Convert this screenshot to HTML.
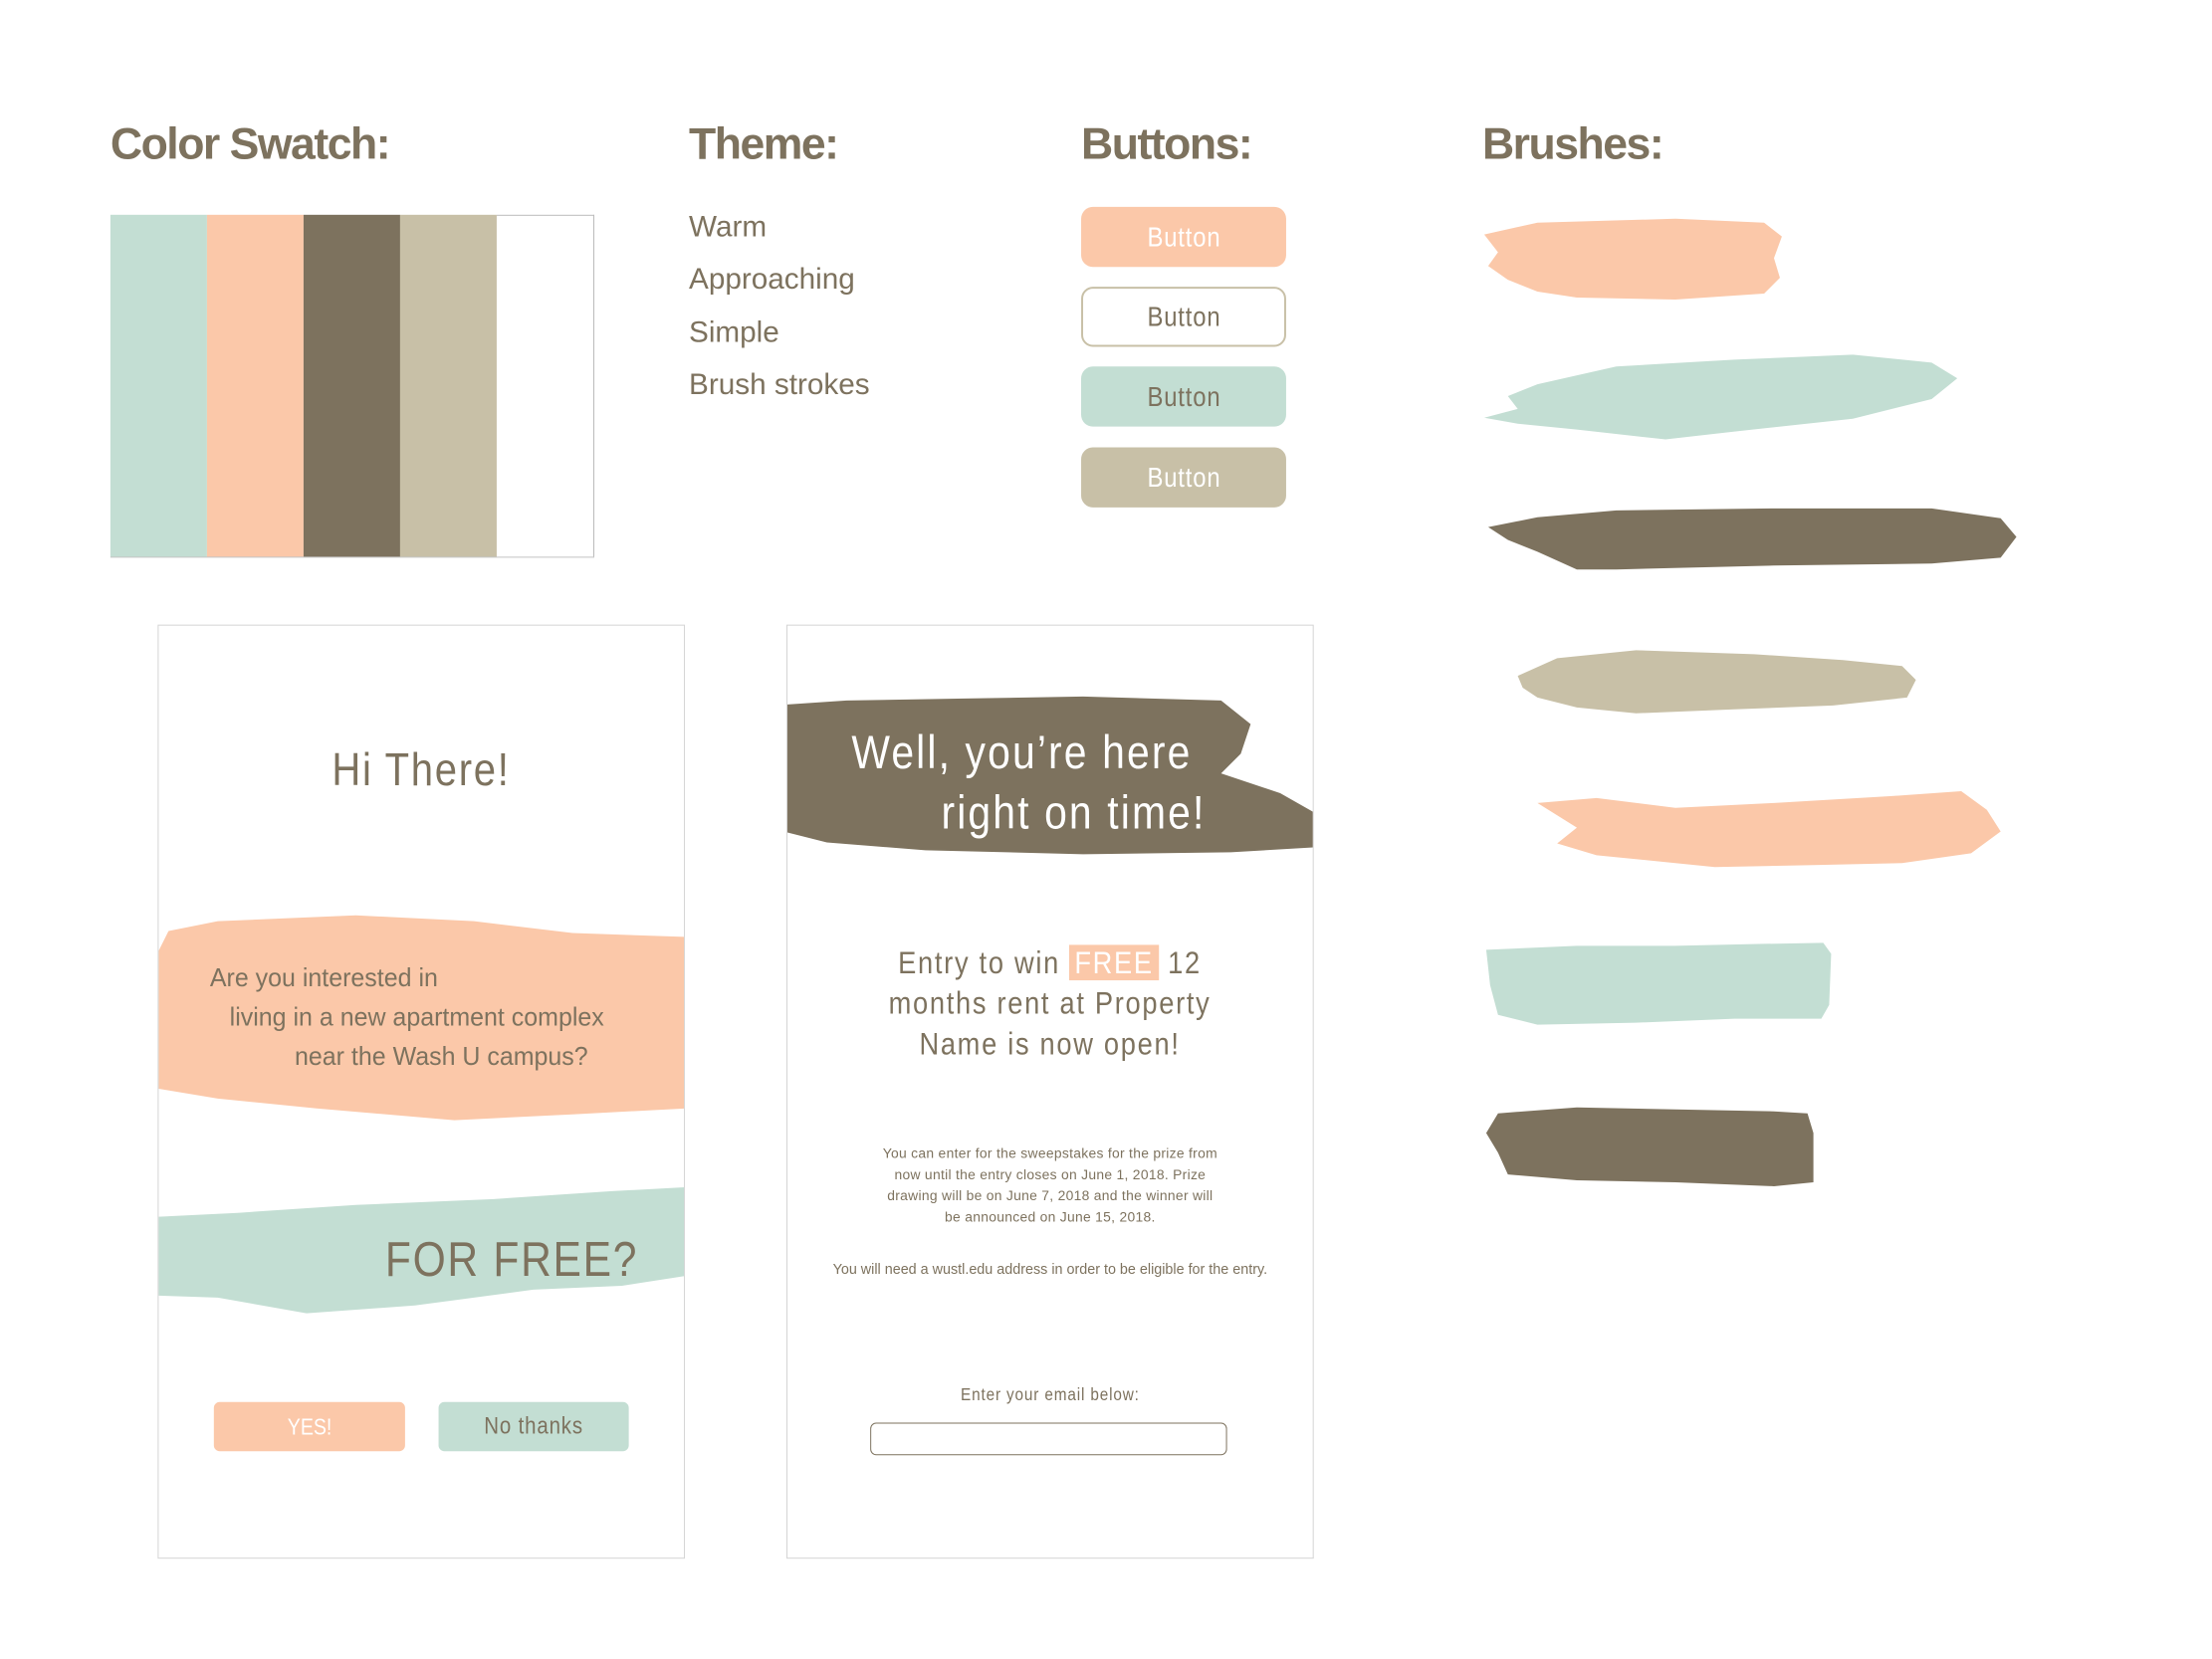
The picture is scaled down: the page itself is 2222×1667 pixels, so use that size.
<!DOCTYPE html>
<html><head><meta charset="utf-8"><style>
*{margin:0;padding:0;box-sizing:border-box}
body{width:2222px;height:1667px;background:#fff;position:relative;overflow:hidden;font-family:"Liberation Sans",sans-serif;color:#7d725e}
#w{position:absolute;left:0;top:0;width:2222px;height:1667px;transform:scale(0.99);transform-origin:0 0}
.a{position:absolute}
h2{position:absolute;font-size:45px;font-weight:bold;letter-spacing:-1.5px;color:#7d725e;top:120px}
.t{position:absolute;left:699px;font-size:30px;line-height:30px}
.btn{position:absolute;left:1097px;width:208px;height:61px;border-radius:12px;font-size:28px;text-align:center;line-height:61px;letter-spacing:1px}
.phone{position:absolute;top:634px;width:535px;height:948px;border:1.5px solid #d4d4d4;background:#fff;overflow:hidden}
.c{position:absolute;width:100%;text-align:center}
.n{display:inline-block;transform:scaleX(.86)}
.nl{display:inline-block;transform:scaleX(.86);transform-origin:0 0}
.nr{display:inline-block;transform:scaleX(.86);transform-origin:100% 0}
</style></head><body><div id="w">
<h2 style="left:112px">Color Swatch:</h2>
<h2 style="left:699px">Theme:</h2>
<h2 style="left:1097px">Buttons:</h2>
<h2 style="left:1504px">Brushes:</h2>

<div class="a" style="left:112px;top:218px;width:491px;height:348px;display:flex;border-bottom:1.5px solid #bbb">
<div style="flex:1;background:#c3ded3"></div><div style="flex:1;background:#fbc8a9"></div><div style="flex:1;background:#7d725e"></div><div style="flex:1;background:#c8c0a7"></div><div style="flex:1;background:#fff;border:1.5px solid #bbb;border-left:none;border-bottom:none"></div></div>

<div class="t" style="top:216px">Warm</div>
<div class="t" style="top:269px">Approaching</div>
<div class="t" style="top:323px">Simple</div>
<div class="t" style="top:376px">Brush strokes</div>

<div class="btn" style="top:210px;background:#fbc8a9;color:#fff"><span class="n">Button</span></div>
<div class="btn" style="top:291px;background:#fff;border:2px solid #c8c0a7;line-height:57px"><span class="n">Button</span></div>
<div class="btn" style="top:372px;background:#c3ded3"><span class="n">Button</span></div>
<div class="btn" style="top:454px;background:#c8c0a7;color:#fff"><span class="n">Button</span></div>

<svg class="a" style="left:0;top:0" width="2222" height="1667">
<path fill="#fbc8a9" d="M1506 238 L1560 226 L1700 222 L1790 226 L1808 240 L1800 262 L1806 282 L1790 298 L1700 304 L1600 302 L1560 296 L1530 284 L1510 270 L1520 256 Z"/>
<path fill="#c3ded3" d="M1530 402 L1560 390 L1640 372 L1760 365 L1880 360 L1960 368 L1986 384 L1960 405 L1880 425 L1760 438 L1690 446 L1600 436 L1540 430 L1506 424 L1540 415 Z"/>
<path fill="#7d725e" d="M1510 535 L1560 525 L1640 518 L1800 516 L1960 516 L2030 526 L2046 545 L2030 566 L1960 572 L1800 574 L1640 578 L1600 578 L1560 560 L1530 548 Z"/>
<path fill="#c8c0a7" d="M1540 686 L1580 668 L1660 660 L1780 664 L1870 670 L1930 676 L1944 690 L1935 708 L1860 716 L1760 720 L1660 724 L1600 718 L1560 708 L1545 698 Z"/>
<path fill="#fbc8a9" d="M1560 815 L1620 810 L1700 820 L1800 815 L1920 808 L1990 803 L2016 822 L2030 844 L2000 866 L1930 876 L1840 878 L1740 880 L1680 874 L1620 868 L1580 856 L1600 840 Z"/>
<path fill="#c3ded3" d="M1508 964 L1600 960 L1700 960 L1790 958 L1850 957 L1858 968 L1856 1020 L1848 1034 L1760 1034 L1660 1038 L1560 1040 L1520 1030 L1512 1000 Z"/>
<path fill="#7d725e" d="M1520 1130 L1600 1124 L1700 1126 L1800 1128 L1834 1130 L1840 1150 L1840 1200 L1800 1204 L1700 1200 L1600 1198 L1530 1192 L1520 1170 L1508 1150 Z"/>
</svg>

<div class="phone" style="left:160px">
<div class="c" style="top:118px;font-size:47px;letter-spacing:2px"><span class="n">Hi There!</span></div>
<svg class="a" style="left:0;top:290px" width="535" height="220"><path fill="#fbc8a9" d="M10 20 L60 10 L200 4 L320 10 L420 22 L535 26 L535 200 L420 206 L300 212 L160 200 L60 190 L0 180 L0 40 Z"/></svg>
<div class="a" style="left:52px;top:342px;font-size:26px;white-space:nowrap"><span class="nl" style="transform:scaleX(.97)">Are you interested in</span></div>
<div class="a" style="left:72px;top:382px;font-size:26px;white-space:nowrap"><span class="nl" style="transform:scaleX(.97)">living in a new apartment complex</span></div>
<div class="a" style="left:138px;top:422px;font-size:26px;white-space:nowrap"><span class="nl" style="transform:scaleX(.97)">near the Wash U campus?</span></div>
<svg class="a" style="left:0;top:570px" width="535" height="140"><path fill="#c3ded3" d="M0 30 L80 26 L200 18 L340 12 L460 4 L535 0 L535 90 L470 100 L380 104 L260 120 L150 128 L60 112 L0 110 Z"/></svg>
<div class="a" style="right:46px;top:614px;font-size:50px;letter-spacing:2px;white-space:nowrap"><span class="nr">FOR FREE?</span></div>
<div class="a" style="left:56px;top:788px;width:194px;height:50px;border-radius:6px;background:#fbc8a9;color:#fff;font-size:23px;text-align:center;line-height:50px"><span class="n">YES!</span></div>
<div class="a" style="left:284px;top:788px;width:193px;height:50px;border-radius:6px;background:#c3ded3;font-size:24px;text-align:center;line-height:50px;letter-spacing:1px"><span class="n">No thanks</span></div>
</div>

<div class="phone" style="left:798px">
<svg class="a" style="left:0;top:70px" width="535" height="170"><path fill="#7d725e" d="M0 10 L60 6 L180 4 L300 2 L440 6 L470 30 L460 60 L440 80 L500 100 L535 120 L535 155 L450 160 L300 162 L140 158 L40 150 L0 140 Z"/></svg>
<div class="a" style="left:65px;top:102px;font-size:48px;color:#fff;letter-spacing:2.5px;white-space:nowrap"><span class="nl">Well, you’re here</span></div>
<div class="a" style="left:156px;top:163px;font-size:48px;color:#fff;letter-spacing:2.5px;white-space:nowrap"><span class="nl">right on time!</span></div>
<div class="c" style="top:322px;font-size:32px;line-height:41px;letter-spacing:2px"><span class="n">Entry to win <span style="background:#fbc8a9;color:#fff;padding:0 6px">FREE</span> 12<br>months rent at Property<br>Name is now open!</span></div>
<div class="c" style="top:525px;font-size:14px;line-height:21.5px;letter-spacing:.3px">You can enter for the sweepstakes for the prize from<br>now until the entry closes on June 1, 2018. Prize<br>drawing will be on June 7, 2018 and the winner will<br>be announced on June 15, 2018.</div>
<div class="c" style="top:646px;font-size:14.5px;white-space:nowrap">You will need a wustl.edu address in order to be eligible for the entry.</div>
<div class="c" style="top:770px;font-size:18px;letter-spacing:1px"><span class="n">Enter your email below:</span></div>
<div class="a" style="left:84px;top:809px;width:362px;height:33px;border:1.5px solid #7d725e;border-radius:6px"></div>
</div>
</div></body></html>
